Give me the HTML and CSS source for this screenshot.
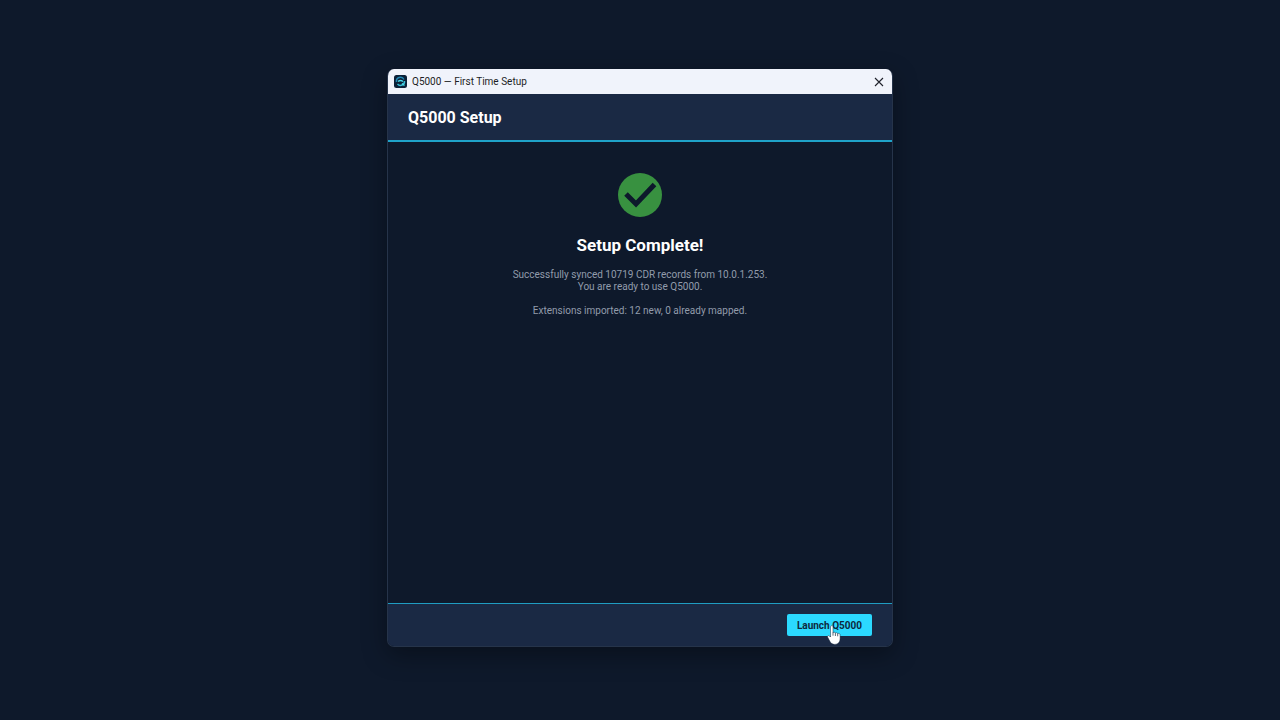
FILE: index.html
```html
<!DOCTYPE html>
<html lang="en">
<head>
  <title>Q5000 — First Time Setup</title>
  <meta charset="UTF-8" />
  <meta name="viewport" content="width=device-width, initial-scale=1" />
  <link rel="stylesheet" href="styles.css">
</head>
<body>
  <main class="window">
    <!-- Title bar -->
    <div class="title-bar">
      <svg class="app-icon" viewBox="0 0 26 26" aria-hidden="true">
        <rect width="26" height="26" rx="5" fill="#0b2138" />
        <path d="M5 14a8 8 0 0 1 15-5" fill="none" stroke="#2389b5" stroke-width="3" />
        <path d="M21 12a8 8 0 0 1-14 6" fill="none" stroke="#38bfd8" stroke-width="3" />
        <path d="M8 13q5-4 10 0M16 17l5 4" fill="none" stroke="#48d8e8" stroke-width="3" />
      </svg>
      <span class="window-title">Q5000 — First Time Setup</span>
      <button type="button" class="close-btn" aria-label="Close">
        <svg viewBox="0 0 10 10" aria-hidden="true">
          <path d="M1 1l8 8M9 1l-8 8" fill="none" stroke="#20232c" stroke-width="1.1" />
        </svg>
      </button>
    </div>

    <header class="setup-header">
      <h1>Q5000 Setup</h1>
    </header>

    <!-- Result -->
    <section class="setup-content">
      <svg class="success-icon" viewBox="0 0 44 44" aria-hidden="true">
        <circle cx="22" cy="22" r="22" fill="#389140" />
        <path d="M8 21l10 10 18.500-19.500" fill="none" stroke="#0d192b" stroke-width="5" />
      </svg>
      <h2>Setup Complete!</h2>
      <p>Successfully synced 10719 CDR records from 10.0.1.253.<br>You are ready to use Q5000.</p>
      <p>Extensions imported: 12 new, 0 already mapped.</p>
    </section>

    <footer class="setup-footer">
      <div class="launch">
        <button type="button" class="launch-btn">Launch Q5000</button>
        <svg class="cursor" viewBox="0 0 14 20" aria-hidden="true">
          <path d="M3.500 1.800C3.500.2 6 .2 6 1.800v6c.3-1 2.300-.8 2.400.4.500-.9 2.200-.6 2.300.6.700-.8 2.400-.3 2.400 1v4c0 3-1.800 5.600-5.200 5.600-2.600 0-3.900-1-4.900-2.800L.7 12.200c-.6-1.200.8-2.200 1.800-1.200l1 1z" fill="#fff" stroke="#16293e" stroke-width=".5" />
          <path d="M6 7.500v3.200M8.400 8.200v2.800M10.700 8.800v2.500" stroke="#16293e" stroke-width=".7" />
        </svg>
      </div>
    </footer>
  </main>
</body>
</html>
```

FILE: styles.css
```css
* {
  box-sizing: border-box;
}

body {
  margin: 0;
  min-height: 100vh;
  padding: 69px 16px 73px;
  display: flex;
  justify-content: center;
  background: #0e192b;
  color: #ffffff;
  font-family: Roboto, sans-serif;
}

.window {
  width: 100%;
  max-width: 506px;
  display: flex;
  flex-direction: column;
  overflow: hidden;
  background: #0e192b;
  border: 1px solid #26344a;
  border-top: 0;
  border-radius: 7px;
  box-shadow: 0 8px 24px rgba(0, 0, 0, 0.35);
}

.title-bar {
  height: 25px;
  padding: 0 7px 0 6px;
  display: flex;
  align-items: center;
  gap: 5px;
  background: #f0f3fb;
  color: #1c1e25;
}

.app-icon {
  width: 13px;
  height: 13px;
}

.window-title {
  flex: 1;
  font-size: 10px;
  line-height: 13px;
}

.close-btn {
  width: 12px;
  height: 12px;
  padding: 1px;
  display: flex;
  background: none;
  border: none;
  cursor: pointer;
}

.close-btn svg {
  width: 10px;
  height: 10px;
}

.setup-header {
  padding: 13px 20px 11px;
  background: #1a2944;
  border-bottom: 2px solid #1fa3c9;
}

h1,
h2 {
  margin: 0;
  font-size: 16px;
  line-height: 22px;
  font-weight: 700;
}

.setup-content {
  flex: 1;
  padding: 31px 20px;
  display: flex;
  flex-direction: column;
  align-items: center;
  text-align: center;
}

.success-icon {
  width: 44px;
  height: 44px;
  margin-bottom: 17px;
}

h2 {
  margin-bottom: 13px;
  font-size: 17px;
}

p {
  margin: 0 0 12px;
  font-size: 10px;
  line-height: 12px;
  color: #929cab;
}

.setup-footer {
  padding: 10px 20px;
  display: flex;
  justify-content: flex-end;
  background: #1a2944;
  border-top: 1px solid #1f9cc2;
}

.launch {
  position: relative;
}

.launch-btn {
  height: 22px;
  padding: 0 10px;
  display: block;
  font-family: inherit;
  font-size: 10px;
  font-weight: 700;
  background: #2bd9ff;
  color: #0d2940;
  border: none;
  border-radius: 2px;
  cursor: pointer;
}

/* Pointer resting on the launch button */
.cursor {
  position: absolute;
  left: 40px;
  top: 11px;
  width: 14px;
  height: 20px;
  pointer-events: none;
}
```
